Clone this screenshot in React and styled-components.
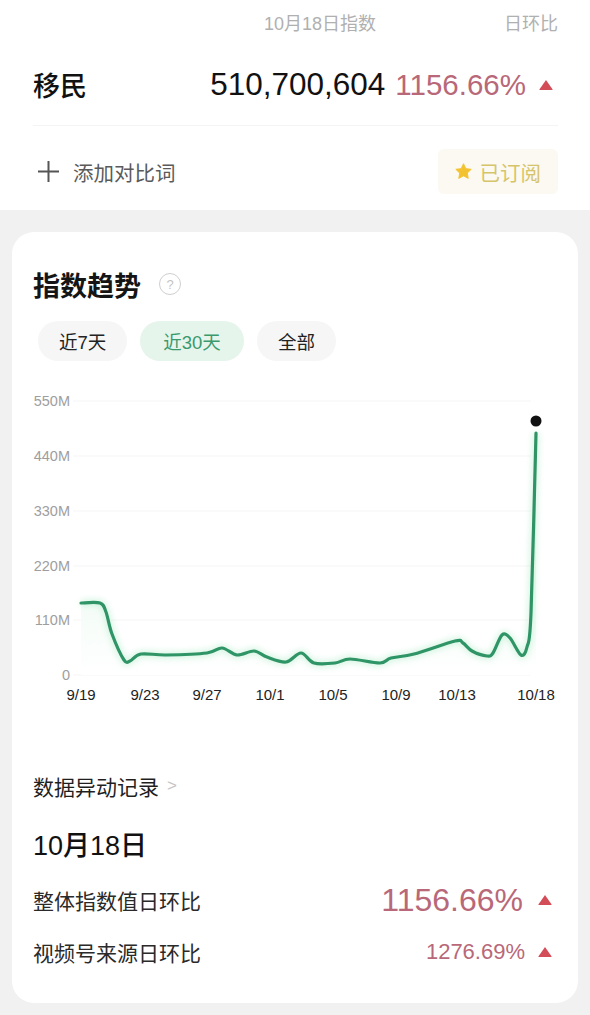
import React from "react";
import styled, { createGlobalStyle } from "styled-components";

const GlobalStyle = createGlobalStyle`
  html, body { margin: 0; padding: 0; background: #f1f1f1; }
  body { font-family: "Liberation Sans", "Noto Sans CJK SC", sans-serif; color: #1a1a1a; }
  * { box-sizing: border-box; }
`;

const Page = styled.div`
  width: 590px;
  min-height: 1015px;
  background: #f1f1f1;
  overflow: hidden;
`;

const Top = styled.section`
  background: #fff;
  height: 210px;
  padding: 0 32px 0 33px;
  display: flex;
  flex-direction: column;
`;

const HeadRow = styled.div`
  display: grid;
  grid-template-columns: 1fr auto 176px;
  height: 44px;
  align-items: center;
  font-size: 18px;
  color: #b0b0b0;
`;

const HeadCell = styled.div`
  text-align: right;
  padding-right: ${p => p.$pr || 0}px;
`;

const MainRow = styled.div`
  display: grid;
  grid-template-columns: 1fr auto auto auto;
  align-items: center;
  height: 82px;
  border-bottom: 1px solid #f4f4f4;
`;

const Keyword = styled.div`
  font-size: 27px;
  font-weight: 500;
  color: #111;
`;

const BigValue = styled.div`
  font-size: 31.5px;
  color: #111;
`;

const Change = styled.div`
  font-size: ${p => p.$size || 28}px;
  color: #b86878;
  margin-left: ${p => p.$ml || 0}px;
`;

const Tri = styled.span`
  display: inline-block;
  width: 0;
  height: 0;
  border-left: ${p => p.$s || 7}px solid transparent;
  border-right: ${p => p.$s || 7}px solid transparent;
  border-bottom: ${p => (p.$s || 7) * 1.5}px solid #d24d58;
  border-radius: 1px;
  margin-left: ${p => p.$ml || 14}px;
  margin-right: 5px;
`;

const ActionRow = styled.div`
  display: flex;
  align-items: center;
  justify-content: space-between;
  margin-top: 23px;
`;

const AddBtn = styled.div`
  display: flex;
  align-items: center;
  gap: 13px;
  font-size: 20.5px;
  color: #5a5a5a;
  padding-left: 4px;
`;

const SubBtn = styled.div`
  display: flex;
  align-items: center;
  gap: 7px;
  height: 45px;
  padding: 0 17px 0 16px;
  background: #fbf9f1;
  border-radius: 6px;
  font-size: 20.5px;
  color: #d6c46a;
`;

const Card = styled.section`
  margin: 22px 12px 12px;
  background: #fff;
  border-radius: 22px;
  height: 771px;
  padding: 35px 21px 0;
  display: flex;
  flex-direction: column;
`;

const TitleRow = styled.div`
  display: flex;
  align-items: center;
  gap: 18px;
  height: 34px;
`;

const Title = styled.h2`
  margin: 0;
  font-size: 27px;
  font-weight: 700;
  color: #151515;
`;

const HelpIcon = styled.span`
  width: 22px;
  height: 22px;
  border: 1.5px solid #cfcfcf;
  border-radius: 50%;
  font-size: 13px;
  color: #c4c4c4;
  display: inline-flex;
  align-items: center;
  justify-content: center;
`;

const Tabs = styled.div`
  display: flex;
  gap: 13px;
  margin-top: 20px;
  padding-left: 5px;
`;

const Tab = styled.div`
  height: 40px;
  padding: 0 ${p => p.$px || 21}px;
  border-radius: 20px;
  display: flex;
  align-items: center;
  font-size: 18.5px;
  background: ${p => (p.$active ? "#e6f5ec" : "#f6f6f6")};
  color: ${p => (p.$active ? "#3b9a6c" : "#222")};
`;

const ChartBox = styled.div`
  margin-top: 29px;
  height: 320px;
`;

const RecordLink = styled.div`
  display: flex;
  align-items: center;
  gap: 8px;
  margin-top: 61px;
  font-size: 21px;
  color: #1f1f1f;
`;

const Chevron = styled.span`
  color: #c4c4c4;
  font-size: 17px;
`;

const DateHead = styled.div`
  margin-top: 23px;
  font-size: 27px;
  font-weight: 500;
  color: #111;
`;

const StatRow = styled.div`
  display: flex;
  align-items: center;
  justify-content: space-between;
  height: ${p => p.$h}px;
  margin-top: ${p => p.$mt}px;
`;

const StatLabel = styled.div`
  font-size: 21px;
  color: #2a2a2a;
`;

const StatValue = styled.div`
  display: flex;
  align-items: center;
`;

// chart coordinates: original page coords minus (33, 390)
const pts = [
  [81, 603], [100, 603], [106, 612], [112, 634], [124, 660], [130, 661], [141, 654], [166, 655],
  [207, 653], [222, 648], [237, 655], [254, 651], [267, 657], [286, 662], [301, 653],
  [314, 663], [335, 663], [350, 659], [380, 663], [391, 658], [414, 654], [455, 641],
  [463, 643], [472, 651], [487, 656], [493, 653], [502, 635], [510, 638], [521, 655],
  [527, 647], [531, 613], [536, 433],
].map(([x, y]) => [x - 33, y - 390]);

function smoothPath(p) {
  let d = `M${p[0][0]},${p[0][1]}`;
  for (let i = 0; i < p.length - 1; i++) {
    const p0 = p[i - 1] || p[i];
    const p1 = p[i];
    const p2 = p[i + 1];
    const p3 = p[i + 2] || p2;
    const t = 0.16;
    const c1x = p1[0] + (p2[0] - p0[0]) * t;
    const c1y = p1[1] + (p2[1] - p0[1]) * t;
    const c2x = p2[0] - (p3[0] - p1[0]) * t;
    const c2y = p2[1] - (p3[1] - p1[1]) * t;
    d += ` C${c1x.toFixed(1)},${c1y.toFixed(1)} ${c2x.toFixed(1)},${c2y.toFixed(1)} ${p2[0]},${p2[1]}`;
  }
  return d;
}

const yLabels = [
  ["550M", 11], ["440M", 66], ["330M", 121], ["220M", 176], ["110M", 230], ["0", 285],
];
const xLabels = [
  ["9/19", 48], ["9/23", 112], ["9/27", 174], ["10/1", 237], ["10/5", 300],
  ["10/9", 363], ["10/13", 424], ["10/18", 503],
];

function TrendChart() {
  const line = smoothPath(pts);
  const last = pts[pts.length - 1];
  const area = `${line} L${last[0]},285 L${pts[0][0]},285 Z`;
  return (
    <svg width="524" height="320" viewBox="0 0 524 320">
      <defs>
        <linearGradient id="fillG" x1="0" y1="0" x2="0" y2="1">
          <stop offset="0" stopColor="#d9f5e4" stopOpacity="1" />
          <stop offset="1" stopColor="#ffffff" stopOpacity="1" />
        </linearGradient>
        <filter id="glow" x="-10%" y="-10%" width="120%" height="130%">
          <feGaussianBlur stdDeviation="3" />
        </filter>
      </defs>
      {yLabels.map(([t, y]) => (
        <g key={t}>
          <line x1="40" x2="498" y1={y} y2={y} stroke="#f5f5f5" strokeWidth="1" />
          <text x="37" y={y + 5} textAnchor="end" fontSize="14.5" fill="#9e9e9e"
            fontFamily="Liberation Sans, sans-serif">{t}</text>
        </g>
      ))}
      <path d={area} fill="url(#fillG)" />
      <path d={line} fill="none" stroke="#7ee0a6" strokeWidth="6" opacity="0.35" filter="url(#glow)" />
      <path d={line} fill="none" stroke="#2f9466" strokeWidth="3.2" strokeLinejoin="round" strokeLinecap="round" />
      <circle cx={last[0]} cy="31" r="5.5" fill="#111" />
      {xLabels.map(([t, x]) => (
        <text key={t} x={x} y="310" textAnchor="middle" fontSize="15" fill="#222"
          fontFamily="Liberation Sans, sans-serif">{t}</text>
      ))}
    </svg>
  );
}

function Star() {
  return (
    <svg width="19" height="19" viewBox="0 0 24 24">
      <path d="M12 2.2l2.95 6.2 6.75.85-4.95 4.7 1.25 6.75L12 17.4l-6 3.3 1.25-6.75L2.3 9.25l6.75-.85z"
        fill="#f2c230" stroke="#f2c230" strokeWidth="1.2" strokeLinejoin="round" />
    </svg>
  );
}

function Plus() {
  return (
    <svg width="23" height="23" viewBox="0 0 23 23">
      <path d="M11.5 1v21M1 11.5h21" stroke="#555" strokeWidth="2" />
    </svg>
  );
}

export default function App() {
  return (
    <Page>
      <GlobalStyle />
      <Top>
        <HeadRow>
          <div />
          <HeadCell $pr={6}>10月18日指数</HeadCell>
          <HeadCell>日环比</HeadCell>
        </HeadRow>
        <MainRow>
          <Keyword>移民</Keyword>
          <BigValue>510,700,604</BigValue>
          <Change $size={29.5} $ml={10}>1156.66%</Change>
          <Tri $ml={13} />
        </MainRow>
        <ActionRow>
          <AddBtn>
            <Plus />
            <span>添加对比词</span>
          </AddBtn>
          <SubBtn>
            <Star />
            <span>已订阅</span>
          </SubBtn>
        </ActionRow>
      </Top>
      <Card>
        <TitleRow>
          <Title>指数趋势</Title>
          <HelpIcon>?</HelpIcon>
        </TitleRow>
        <Tabs>
          <Tab>近7天</Tab>
          <Tab $active $px={23}>近30天</Tab>
          <Tab>全部</Tab>
        </Tabs>
        <ChartBox>
          <TrendChart />
        </ChartBox>
        <RecordLink>
          数据异动记录
          <Chevron>&gt;</Chevron>
        </RecordLink>
        <DateHead>10月18日</DateHead>
        <StatRow $h={40} $mt={17}>
          <StatLabel>整体指数值日环比</StatLabel>
          <StatValue>
            <Change $size={32}>1156.66%</Change>
            <Tri $ml={15} />
          </StatValue>
        </StatRow>
        <StatRow $h={40} $mt={12}>
          <StatLabel>视频号来源日环比</StatLabel>
          <StatValue>
            <Change $size={22}>1276.69%</Change>
            <Tri $ml={13} />
          </StatValue>
        </StatRow>
      </Card>
    </Page>
  );
}
